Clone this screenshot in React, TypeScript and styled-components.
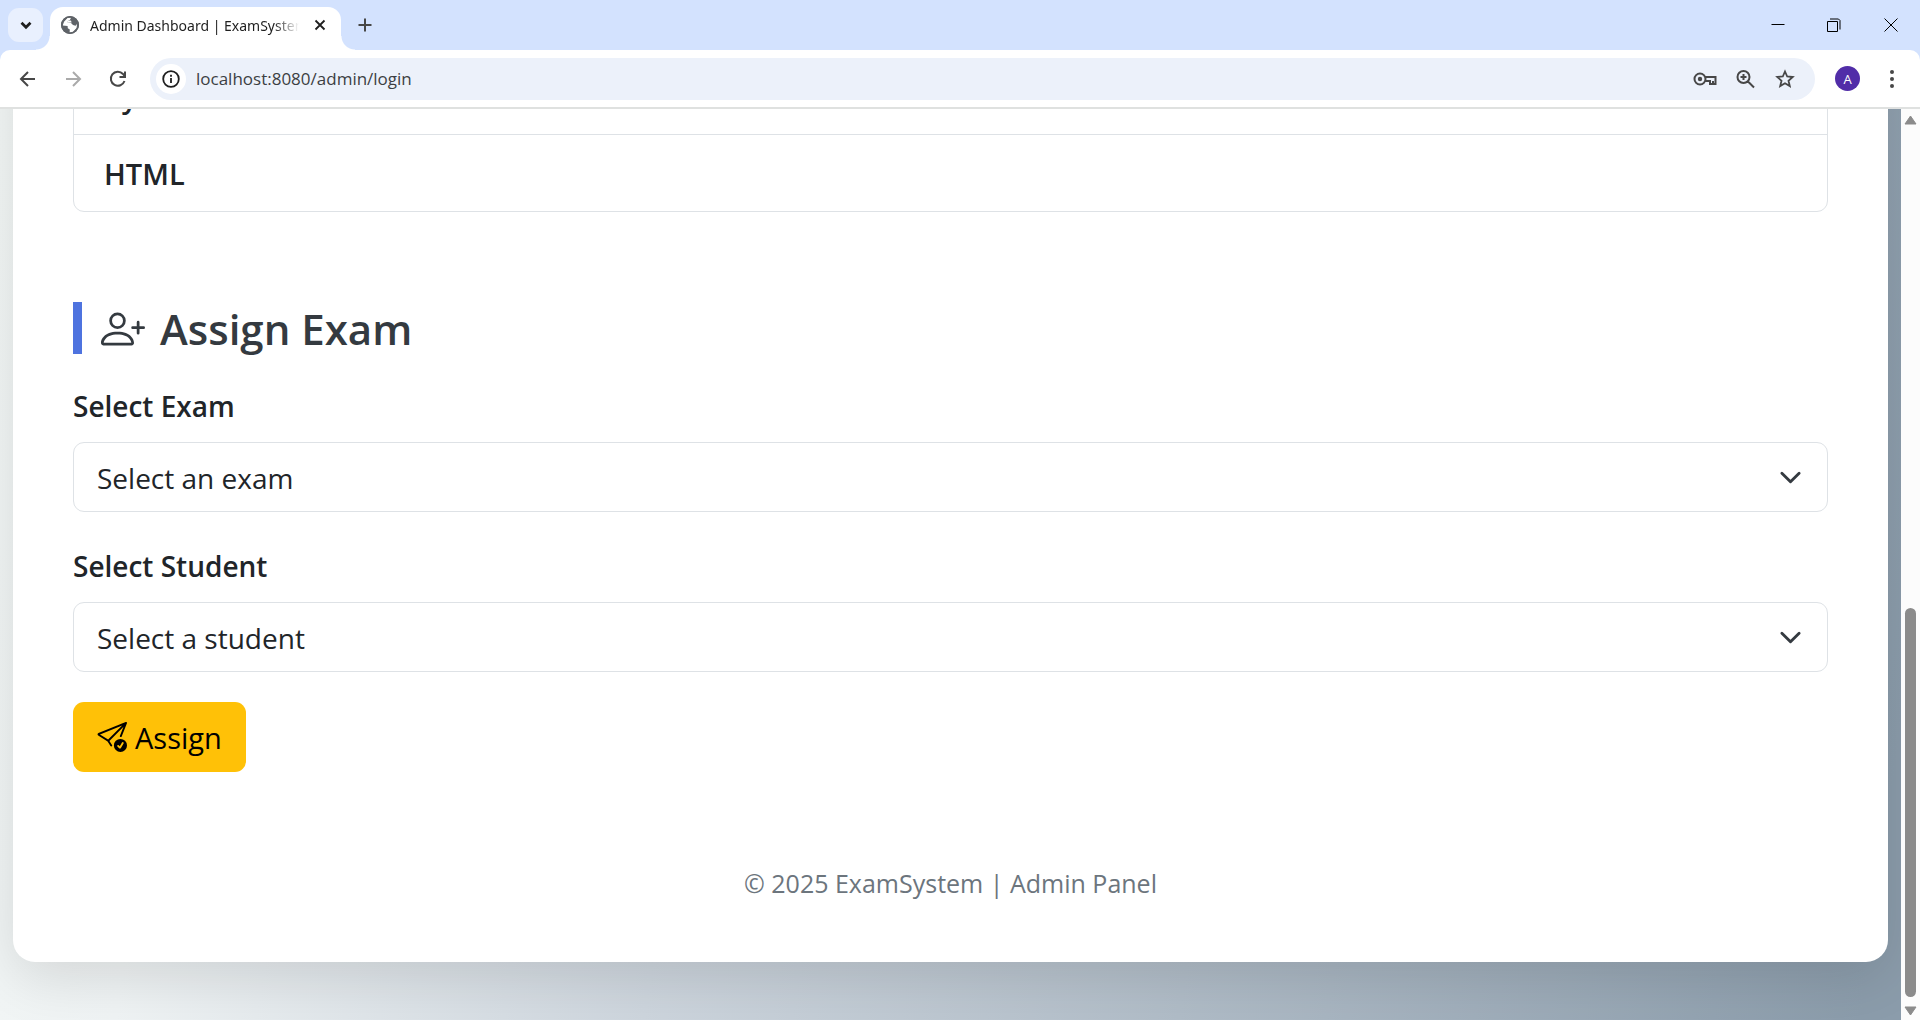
import React from 'react';
import styled, { createGlobalStyle } from 'styled-components';
import { BsPersonPlus, BsSendCheck } from 'react-icons/bs';

const Global = createGlobalStyle`
  * { box-sizing: border-box; }
  body { margin: 0; font-family: 'Open Sans', 'Noto Sans', sans-serif; color: #212529; }
  button, select { font-family: inherit; }
`;

const Browser = styled.div`
  height: 100vh;
  display: flex;
  flex-direction: column;
  overflow: hidden;
  background: #d3e2fe;
`;

const TabStrip = styled.header`
  height: 50px;
  flex: none;
  display: flex;
  align-items: stretch;
  padding-left: 8px;
`;

const TabSearch = styled.button`
  width: 35px;
  height: 34px;
  margin: 8px 7px 0 0;
  padding: 0;
  border: 0;
  border-radius: 11px;
  background: #e9f0fe;
  display: grid;
  place-items: center;
`;

const Tab = styled.div`
  position: relative;
  width: 291px;
  margin-top: 7px;
  padding: 0 11px 7px 11px;
  border-radius: 13px 13px 0 0;
  background: #fff;
  display: flex;
  align-items: center;
  gap: 11px;
  &::before, &::after {
    content: '';
    position: absolute;
    bottom: 0;
    width: 14px;
    height: 14px;
  }
  &::before { right: 100%; background: radial-gradient(circle at 0 0, transparent 13px, #fff 14px); }
  &::after { left: 100%; background: radial-gradient(circle at 100% 0, transparent 13px, #fff 14px); }
`;

const TabTitle = styled.span`
  flex: 1;
  overflow: hidden;
  white-space: nowrap;
  font-family: 'Noto Sans', sans-serif;
  font-size: 14px;
  line-height: 20px;
  padding-top: 1px;
  color: #1f1f1f;
  mask-image: linear-gradient(to right, #000 88%, transparent);
`;

const PlainButton = styled.button<{ $w: number }>`
  width: ${p => p.$w}px;
  padding: 0;
  border: 0;
  background: none;
  display: grid;
  place-items: center;
  flex: none;
`;

const WindowButtons = styled.div`
  margin-left: auto;
  display: flex;
`;

const Toolbar = styled.nav`
  height: 59px;
  flex: none;
  display: flex;
  align-items: center;
  padding: 0 8px 0 5px;
  background: #fff;
  border-bottom: 2px solid #dfe1e0;
  border-radius: 10px 10px 0 0;
`;

const AddressBar = styled.div`
  flex: 1;
  height: 42px;
  margin: 0 10px;
  padding: 0 10px 0 6px;
  border-radius: 21px;
  background: #ecf1fa;
  display: flex;
  align-items: center;
`;

const SiteInfo = styled.button`
  width: 30px;
  height: 30px;
  padding: 0;
  border: 0;
  border-radius: 50%;
  background: #fff;
  display: grid;
  place-items: center;
`;

const Address = styled.input`
  flex: 1;
  min-width: 0;
  border: 0;
  padding: 1px 10px 0;
  background: none;
  font: 17px/24px 'Open Sans', sans-serif;
  color: #3c3f43;
`;

const Avatar = styled.button`
  width: 25px;
  height: 25px;
  margin: 0 12px 0 10px;
  padding: 0;
  border: 0;
  border-radius: 50%;
  background: #512da8;
  color: #fff;
  font-size: 13px;
`;

const View = styled.div`
  flex: 1;
  min-height: 0;
  display: flex;
`;

const Page = styled.main`
  flex: 1;
  overflow: hidden;
  display: flex;
  flex-direction: column;
  justify-content: flex-end;
  padding: 0 13px 58px;
  background: linear-gradient(98deg, #f3f7f6 0%, #eff3f4 12%, #cdd5dd 38%, #8b9cab 98%);
`;

const Card = styled.div`
  flex: none;
  padding: 60px 60px 59px;
  border-radius: 22px;
  background: #fff;
  box-shadow: 0 15px 56px rgba(0, 0, 0, 0.12);
`;

const ExamList = styled.ul`
  margin: 0 0 90px;
  padding: 0;
  list-style: none;
  border: 1px solid #dee2e6;
  border-radius: 11px;
`;

const ExamItem = styled.li`
  padding: 16px 30px 14px;
  font-size: 29px;
  line-height: 46px;
  font-weight: 600;
  & + & { border-top: 1px solid #dee2e6; }
`;

const Heading = styled.h2`
  margin: 0 0 28px;
  padding: 2px 0 0 19px;
  border-left: 9px solid #4e73df;
  display: flex;
  align-items: center;
  gap: 15px;
  font-size: 42px;
  line-height: 50px;
  font-weight: 600;
  color: #343a40;
`;

const Field = styled.div`
  margin-bottom: 30px;
`;

const Label = styled.label`
  display: block;
  margin-bottom: 12px;
  font-size: 28px;
  line-height: 48px;
  font-weight: 600;
`;

const SelectWrap = styled.div`
  display: grid;
  align-items: center;
  & > * { grid-area: 1 / 1; }
  & > svg { justify-self: end; margin-right: 26px; pointer-events: none; }
`;

const Select = styled.select`
  appearance: none;
  width: 100%;
  height: 70px;
  padding: 2px 23px 0;
  border: 1px solid #dee2e6;
  border-radius: 11px;
  background: #fff;
  color: #212529;
  font-size: 28px;
`;

const AssignButton = styled.button`
  height: 70px;
  padding: 0 24px;
  border: 0;
  border-radius: 11px;
  background: #ffc107;
  color: #000;
  display: flex;
  align-items: center;
  gap: 8px;
  font-size: 29px;
`;

const Footer = styled.footer`
  margin-top: 91px;
  text-align: center;
  font-size: 25px;
  line-height: 40px;
  color: #6c757d;
`;

const Scrollbar = styled.div`
  width: 19px;
  background: #fcfcfc;
  display: flex;
  flex-direction: column;
  align-items: center;
  justify-content: space-between;
  padding: 6px 0 4px;
`;

const Track = styled.div`
  flex: 1;
  margin: 8px 0 9px;
  display: flex;
  align-items: flex-end;
`;

const Thumb = styled.div`
  width: 11px;
  height: 45%;
  border-radius: 6px;
  background: #8b8b8b;
`;

type StrokeProps = { size?: number; color?: string; width?: number; d: string };
const Stroke = ({ size = 20, color = '#474747', width = 2, d }: StrokeProps) => (
  <svg width={size} height={size} viewBox="0 0 20 20" fill="none" stroke={color} strokeWidth={width}>
    <path d={d} />
  </svg>
);

const Globe = () => (
  <svg width="18" height="18" viewBox="0 0 18 18">
    <circle cx="9" cy="9" r="9" fill="#5f6368" />
    <path d="M3 5.8 6.5 2 10 1.8 8.8 4.2 6.8 5 6.8 6.8 10 7 12 9 14.5 9.8 16 8 15.6 12 12 15.8 8.6 16.4 8.8 13.6 6.8 12.2 6.6 10 1.7 9.4Z" fill="#fff" />
    <path d="M6.8 5 10 4.4 10.6 6.6 6.8 6.8Z" fill="#fff" />
    <circle cx="9" cy="9" r="8.2" fill="none" stroke="#5f6368" strokeWidth="1.6" />
  </svg>
);

const SelectChevron = () => (
  <svg width="23" height="23" viewBox="0 0 16 16" fill="none" stroke="#343a40" strokeWidth="2" strokeLinecap="round" strokeLinejoin="round">
    <path d="m2 5 6 6 6-6" />
  </svg>
);

const SelectField = ({ id, label, placeholder }: { id: string; label: string; placeholder: string }) => (
  <Field>
    <Label htmlFor={id}>{label}</Label>
    <SelectWrap>
      <Select id={id} defaultValue="">
        <option value="">{placeholder}</option>
      </Select>
      <SelectChevron />
    </SelectWrap>
  </Field>
);

export default function App() {
  return (
    <Browser>
      <Global />
      <TabStrip>
        <TabSearch aria-label="Search tabs"><Stroke size={18} width={3} color="#1f1f1f" d="m5 7.5 5 5 5-5" /></TabSearch>
        <Tab>
          <Globe />
          <TabTitle>Admin Dashboard | ExamSystem</TabTitle>
          <PlainButton $w={20} aria-label="Close tab"><Stroke size={18} color="#1f1f1f" d="m5 5 10 10M15 5 5 15" /></PlainButton>
        </Tab>
        <PlainButton $w={48} aria-label="New tab"><Stroke d="M10 3.5v13M3.5 10h13" /></PlainButton>
        <WindowButtons>
          <PlainButton $w={56} aria-label="Minimize"><Stroke width={1} color="#000" d="M3.5 9.5h13" /></PlainButton>
          <PlainButton $w={56} aria-label="Restore"><Stroke width={1} color="#000" d="M3.5 6.5h10v10h-10zM6 4h8.5l1.5 1.5v9" /></PlainButton>
          <PlainButton $w={58} aria-label="Close"><Stroke width={1} color="#000" d="m3.5 3.5 13 13M16.5 3.5l-13 13" /></PlainButton>
        </WindowButtons>
      </TabStrip>
      <Toolbar>
        <PlainButton $w={45} aria-label="Back"><Stroke d="M17 10H4M10 3l-7 7 7 7" /></PlainButton>
        <PlainButton $w={45} aria-label="Forward"><Stroke color="#aaa" d="M3 10h13M10 3l7 7-7 7" /></PlainButton>
        <PlainButton $w={45} aria-label="Reload"><Stroke d="M16.5 12A7 7 0 1 1 15 5l1.5 2M17 2.5V8h-5.5" /></PlainButton>
        <AddressBar>
          <SiteInfo aria-label="Site information">
            <svg width="18" height="18" viewBox="0 0 18 18" fill="none" stroke="#1f1f1f" strokeWidth="1.8">
              <circle cx="9" cy="9" r="7.8" /><path d="M9 8v5M9 4.8v2" />
            </svg>
          </SiteInfo>
          <Address aria-label="Address" defaultValue="localhost:8080/admin/login" />
          <PlainButton $w={40} aria-label="Passwords">
            <svg width="24" height="16" viewBox="0 0 24 16" fill="none" stroke="#474747" strokeWidth="2">
              <circle cx="7" cy="8" r="5.5" /><circle cx="7" cy="8" r="2.2" fill="#474747" stroke="none" />
              <path d="M12 6h10.500v7H17v-3h-5M20 10v3" />
            </svg>
          </PlainButton>
          <PlainButton $w={40} aria-label="Zoom"><Stroke d="M14.5 8A6 6 0 1 1 2.500 8a6 6 0 0 1 12 0ZM13 12.500l6 6M5.500 8h6M8.500 5v6" /></PlainButton>
          <PlainButton $w={40} aria-label="Bookmark"><Stroke width={1.8} d="m10 2.500 2.200 5 5.500.5-4.200 3.700 1.300 5.400L10 14.200l-4.800 2.900 1.300-5.400L2.300 8l5.500-.5Z" /></PlainButton>
        </AddressBar>
        <Avatar aria-label="Profile">A</Avatar>
        <PlainButton $w={40} aria-label="Menu">
          <svg width="20" height="20" viewBox="0 0 20 20" fill="#474747"><circle cx="10" cy="3" r="2" /><circle cx="10" cy="10" r="2" /><circle cx="10" cy="17" r="2" /></svg>
        </PlainButton>
      </Toolbar>
      <View>
        <Page>
          <Card>
            <ExamList>
              <ExamItem>Python</ExamItem>
              <ExamItem>HTML</ExamItem>
            </ExamList>
            <Heading><BsPersonPlus size={44} />Assign Exam</Heading>
            <form onSubmit={e => e.preventDefault()}>
              <SelectField id="exam" label="Select Exam" placeholder="Select an exam" />
              <SelectField id="student" label="Select Student" placeholder="Select a student" />
              <AssignButton type="submit"><BsSendCheck size={30} />Assign</AssignButton>
            </form>
            <Footer>© 2025 ExamSystem | Admin Panel</Footer>
          </Card>
        </Page>
        <Scrollbar>
          <svg width="13" height="10" viewBox="0 0 13 10"><path d="M6.500 1 12 9H1Z" fill="#8b8b8b" stroke="#8b8b8b" strokeLinejoin="round" /></svg>
          <Track><Thumb /></Track>
          <svg width="13" height="10" viewBox="0 0 13 10"><path d="M6.500 9 12 1H1Z" fill="#8b8b8b" stroke="#8b8b8b" strokeLinejoin="round" /></svg>
        </Scrollbar>
      </View>
    </Browser>
  );
}
